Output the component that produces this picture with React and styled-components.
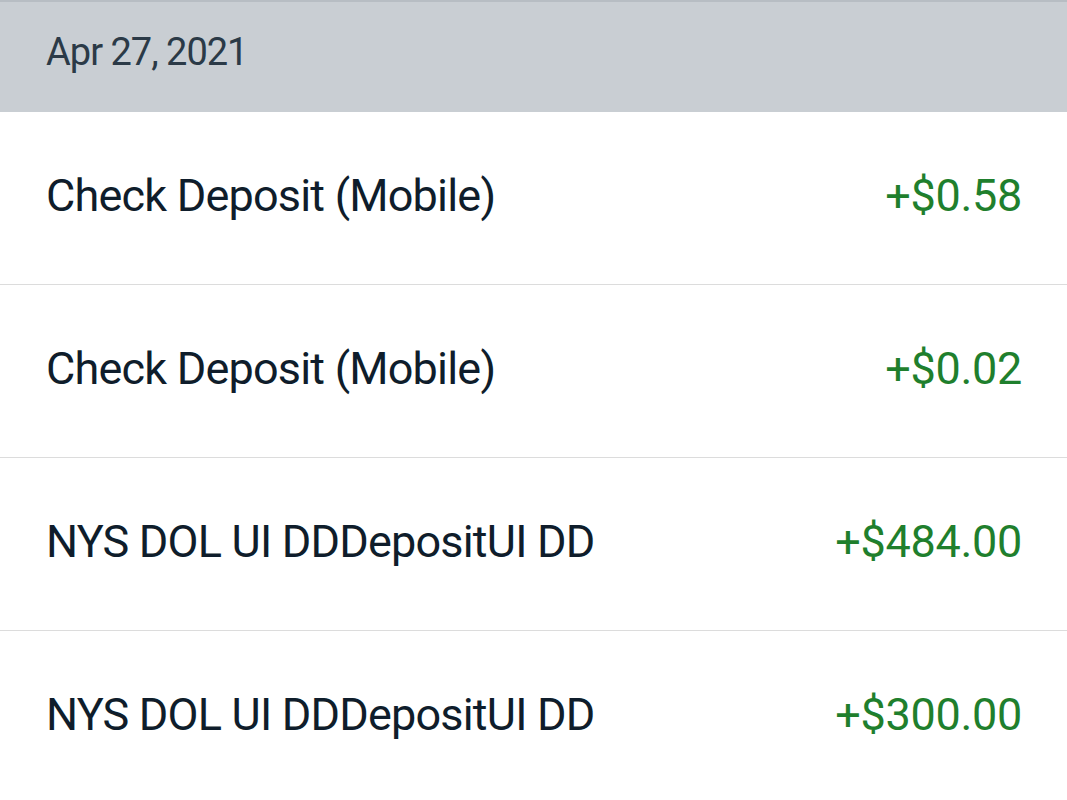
import React from "react";
import styled, { createGlobalStyle } from "styled-components";

const GlobalStyle = createGlobalStyle`
  html, body {
    margin: 0;
    padding: 0;
    background: #ffffff;
  }
  body {
    font-family: Roboto, "Noto Sans", sans-serif;
    overflow: hidden;
  }
`;

const Screen = styled.div`
  width: 1067px;
  height: 800px;
  overflow: hidden;
  background: #ffffff;
`;

const DateHeader = styled.div`
  height: 110px;
  box-sizing: border-box;
  border-top: 2px solid #b7bdc3;
  background: #c9ced3;
  display: flex;
  align-items: center;
  padding: 0 46px 10px;
  color: #2b3a47;
  font-size: 38px;
  letter-spacing: -1px;
  height: 112px;
`;

const List = styled.div`
  display: flex;
  flex-direction: column;
`;

const Row = styled.div`
  height: 172px;
  box-sizing: border-box;
  display: flex;
  align-items: center;
  justify-content: space-between;
  padding: 0 45px 6px 46px;
  border-bottom: 1px solid #dcdcdc;
  font-size: 45px;
  height: 173px;
`;

const Label = styled.span`
  color: #0f1d2b;
  letter-spacing: -0.8px;
`;

const Amount = styled.span`
  color: ${(p) => (p.$credit ? "#1f7f2d" : "#0f1d2b")};
  letter-spacing: -0.3px;
`;

const transactions = [
  { label: "Check Deposit (Mobile)", amount: "+$0.58" },
  { label: "Check Deposit (Mobile)", amount: "+$0.02" },
  { label: "NYS DOL UI DDDepositUI DD", amount: "+$484.00" },
  { label: "NYS DOL UI DDDepositUI DD", amount: "+$300.00" },
];

const App = () => {
  return (
    <Screen>
      <GlobalStyle />
      <DateHeader>Apr 27, 2021</DateHeader>
      <List>
        {transactions.map((t, i) => (
          <Row key={i}>
            <Label>{t.label}</Label>
            <Amount $credit>{t.amount}</Amount>
          </Row>
        ))}
      </List>
    </Screen>
  );
};

export default App;
